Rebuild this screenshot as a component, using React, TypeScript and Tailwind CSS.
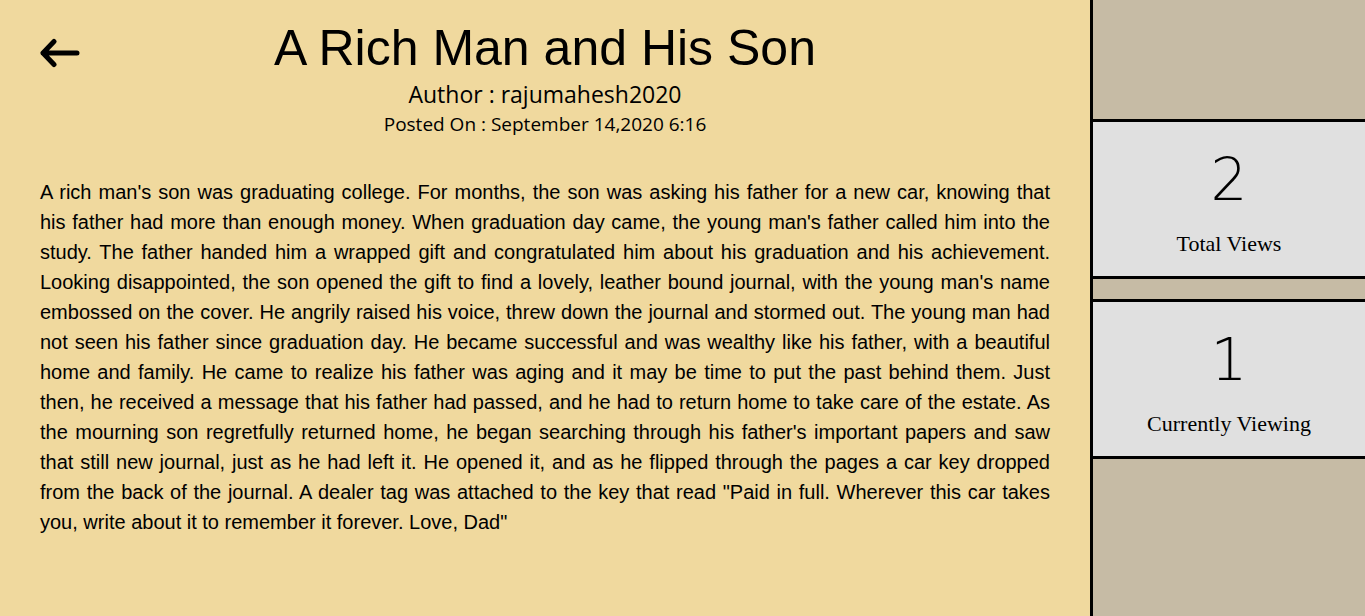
const story = `A rich man's son was graduating college. For months, the son was asking his father for a new car, knowing that his father had more than enough money. When graduation day came, the young man's father called him into the study. The father handed him a wrapped gift and congratulated him about his graduation and his achievement. Looking disappointed, the son opened the gift to find a lovely, leather bound journal, with the young man's name embossed on the cover. He angrily raised his voice, threw down the journal and stormed out. The young man had not seen his father since graduation day. He became successful and was wealthy like his father, with a beautiful home and family. He came to realize his father was aging and it may be time to put the past behind them. Just then, he received a message that his father had passed, and he had to return home to take care of the estate. As the mourning son regretfully returned home, he began searching through his father's important papers and saw that still new journal, just as he had left it. He opened it, and as he flipped through the pages a car key dropped from the back of the journal. A dealer tag was attached to the key that read "Paid in full. Wherever this car takes you, write about it to remember it forever. Love, Dad"`;

const stats = [
  { value: 2, label: "Total Views" },
  { value: 1, label: "Currently Viewing" },
];

const BackArrow = () => (
  <svg width="40" height="30" viewBox="0 0 40 30" fill="none">
    <path
      d="M14 3.5 L3 15 L14 26.5 M3 15 H37"
      stroke="#000"
      strokeWidth="5"
      strokeLinecap="round"
      strokeLinejoin="round"
    />
  </svg>
);

const App = () => {
  return (
    <div className="flex h-screen w-full overflow-hidden">
      {/* Story */}
      <main className="flex-1 h-full overflow-auto bg-[#f0d99e] px-10">
        <header className="grid grid-cols-[60px_1fr_60px] pt-[18px]">
          <button className="mt-[20px] h-[30px] w-[40px]" aria-label="Back">
            <BackArrow />
          </button>
          <div className="flex flex-col items-center">
            <h1 className="font-['Liberation_Sans',Arial,sans-serif] text-[50px] leading-[60px] text-black">
              A Rich Man and His Son
            </h1>
            <p className="font-['Open_Sans','Noto_Sans',sans-serif] text-[23px] leading-[32px] text-black">
              Author : rajumahesh2020
            </p>
            <p className="font-['Open_Sans','Noto_Sans',sans-serif] text-[19px] leading-[28px] text-black">
              Posted On : September 14,2020 6:16
            </p>
          </div>
          <div />
        </header>
        <p className="mt-[39px] text-justify font-['Liberation_Sans',Arial,sans-serif] text-[20px] leading-[30px] text-black">
          {story}
        </p>
      </main>

      {/* Stats */}
      <aside className="flex h-full w-[275px] flex-col gap-5 border-l-[3px] border-black bg-[#c6bba5] pt-[119px]">
        {stats.map((s) => (
          <div
            key={s.label}
            className="flex h-[160px] flex-col items-center border-y-[3px] border-black bg-[#e0e0e0] pt-[22px]"
          >
            <span className="font-['DejaVu_Sans',sans-serif] text-[58px] font-extralight leading-[72px] text-black">
              {s.value}
            </span>
            <span className="mt-[15px] font-['Liberation_Serif','Times_New_Roman',serif] text-[22px] leading-[26px] text-black">
              {s.label}
            </span>
          </div>
        ))}
      </aside>
    </div>
  );
};

export default App;
